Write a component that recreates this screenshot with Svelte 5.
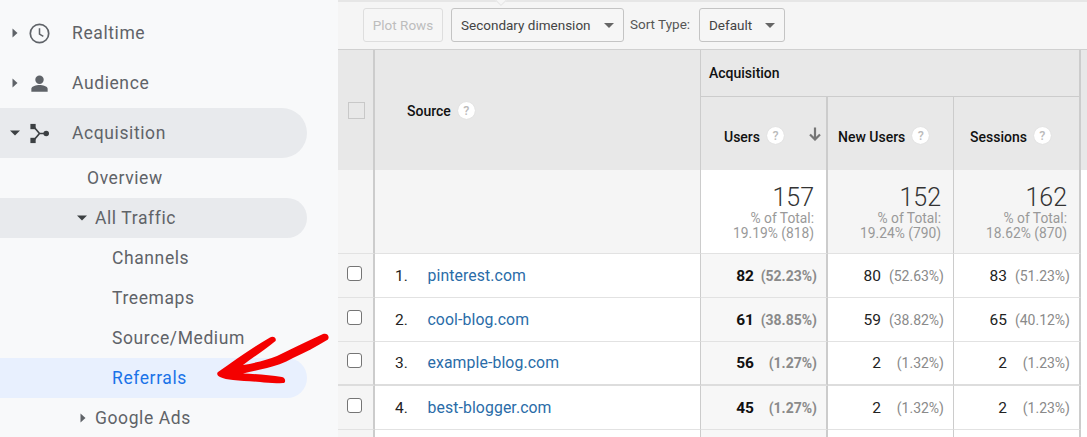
<script>
  const rows = [
    { n: 1, site: 'pinterest.com', users: 82, usersPct: '(52.23%)', newUsers: 80, newPct: '(52.63%)', sessions: 83, sessPct: '(51.23%)' },
    { n: 2, site: 'cool-blog.com', users: 61, usersPct: '(38.85%)', newUsers: 59, newPct: '(38.82%)', sessions: 65, sessPct: '(40.12%)' },
    { n: 3, site: 'example-blog.com', users: 56, usersPct: '(1.27%)', newUsers: 2, newPct: '(1.32%)', sessions: 2, sessPct: '(1.23%)' },
    { n: 4, site: 'best-blogger.com', users: 45, usersPct: '(1.27%)', newUsers: 2, newPct: '(1.32%)', sessions: 2, sessPct: '(1.23%)' }
  ];

  const totals = [
    { value: 157, pct: '19.19% (818)', main: true },
    { value: 152, pct: '19.24% (790)' },
    { value: 162, pct: '18.62% (870)' }
  ];
</script>

<div class="page">
  <nav class="sidebar">
    <div class="item top">
      <svg class="caret" viewBox="0 0 6 10"><path d="M0.5 0.5 5.5 5 0.5 9.5z" /></svg>
      <svg class="icon" viewBox="0 0 24 24">
        <circle cx="12" cy="12" r="9.6" fill="none" stroke="#5f6368" stroke-width="1.8" />
        <path d="M12 6.5V12.6L16 15" fill="none" stroke="#5f6368" stroke-width="1.6" />
      </svg>
      <span>Realtime</span>
    </div>
    <div class="item top">
      <svg class="caret" viewBox="0 0 6 10"><path d="M0.5 0.5 5.5 5 0.5 9.5z" /></svg>
      <svg class="icon" viewBox="0 0 24 24">
        <circle cx="12" cy="8" r="4.4" fill="#5f6368" />
        <path d="M3.5 20.5V17.6C3.5 14.8 8.8 13.6 12 13.6S20.500 14.800 20.500 17.6V20.500z" fill="#5f6368" />
      </svg>
      <span>Audience</span>
    </div>
    <div class="item top pill">
      <svg class="caret down" viewBox="0 0 10 6"><path d="M0 0.5H10L5 5.500z" /></svg>
      <svg class="icon" viewBox="0 0 24 24">
        <rect x="2.500" y="2" width="5.500" height="5.500" fill="#3c4043" />
        <rect x="2.500" y="16.500" width="5.500" height="5.500" fill="#3c4043" />
        <circle cx="19" cy="12" r="2.900" fill="#3c4043" />
        <path d="M6 5 12 12H19M12 12 6 19" fill="none" stroke="#3c4043" stroke-width="1.800" />
      </svg>
      <span>Acquisition</span>
    </div>
    <div class="item sub overview"><span>Overview</span></div>
    <div class="item sub second pill">
      <svg class="caret down" viewBox="0 0 10 6"><path d="M0 0.5H10L5 5.500z" /></svg>
      <span>All Traffic</span>
    </div>
    <div class="item sub third"><span>Channels</span></div>
    <div class="item sub third"><span>Treemaps</span></div>
    <div class="item sub third"><span>Source/Medium</span></div>
    <div class="item sub third pill active"><span>Referrals</span></div>
    <div class="item sub second">
      <svg class="caret" viewBox="0 0 6 10"><path d="M0.5 0.5 5.5 5 0.5 9.5z" /></svg>
      <span>Google Ads</span>
    </div>
  </nav>

  <main class="report">
    <div class="toolbar">
      <button class="btn disabled">Plot Rows</button>
      <button class="btn secondary">Secondary dimension <i class="tri"></i></button>
      <span class="sort-label">Sort Type:</span>
      <button class="btn sort">Default <i class="tri"></i></button>
    </div>

    <div class="thead">
      <div class="th check-head"><span class="head-box"></span></div>
      <div class="th source-head">Source <span class="help">?</span></div>
      <div class="th group-head">Acquisition</div>
      <div class="th edge-head"></div>
      <div class="th metric users-head">Users <span class="help">?</span>
        <svg class="sort-arrow" viewBox="0 0 12 14"><path d="M6 0.500V12M1 7.500 6 12.500 11 7.500" fill="none" stroke="#757575" stroke-width="2.200" /></svg>
      </div>
      <div class="th metric">New Users <span class="help">?</span></div>
      <div class="th metric last">Sessions <span class="help">?</span></div>
    </div>

    <div class="row total">
      <div class="cell check"></div>
      <div class="cell source"></div>
      {#each totals as t, i}
        <div class="cell sum" class:main={t.main} class:thick={i !== 1}>
          <div class="big">{t.value}</div>
          <div class="of">% of Total:</div>
          <div class="of">{t.pct}</div>
        </div>
      {/each}
    </div>

    {#each rows as r}
      <div class="row data" class:heavy={r.n === 3}>
        <div class="cell check"><span class="box"></span></div>
        <div class="cell source"><span class="num">{r.n}.</span><span class="link">{r.site}</span></div>
        <div class="cell val main thick"><b>{r.users}</b><span class="pct">{r.usersPct}</span></div>
        <div class="cell val"><span>{r.newUsers}</span><span class="pct">{r.newPct}</span></div>
        <div class="cell val thick"><span>{r.sessions}</span><span class="pct">{r.sessPct}</span></div>
      </div>
    {/each}
    <div class="row data tail">
      <div class="cell check"></div>
      <div class="cell source"></div>
      <div class="cell val main thick"></div>
      <div class="cell val"></div>
      <div class="cell val thick"></div>
    </div>
  </main>

  <!-- hand drawn annotation on top of the page -->
  <svg class="scribble" viewBox="0 0 1087 437">
    <path
      fill="#f40000"
      d="M218 372C235 360 253 347 270 337.500C273 335.500 277 338 275.500 341C266 349 255 356 243 365C255 363 267 360 277 356C292 349 307 341 323 334C327 332.500 330 336 328 339.500C316 347 304 353 293 358C284 363 275 366 267 368C258 370 250 372 243 373.500C256 374 270 375 282 377C286 378 286 383 283 383C275 383.500 267 383 260 382C250 381 241 381 233 380C228 379.500 223 378.500 220 377C217 375.500 216.500 373.500 218 372z"
    />
  </svg>
</div>

<style>
  :global(body) {
    margin: 0;
    background: #fff;
  }

  .page {
    position: relative;
    display: flex;
    width: 1087px;
    height: 437px;
    overflow: hidden;
    font-family: Roboto, "Liberation Sans", sans-serif;
  }

  /* sidebar */
  .sidebar {
    flex: 0 0 338px;
    box-sizing: border-box;
    padding: 8px 31px 0 0;
    background: #f8f9fa;
  }

  .item {
    position: relative;
    display: flex;
    align-items: center;
    height: 40px;
    font-size: 17.500px;
    letter-spacing: 0.6px;
    color: #5f6368;
  }

  .top {
    height: 50px;
    padding-left: 72px;
  }

  .pill {
    background: #e8eaed;
    border-radius: 0 25px 25px 0;
  }

  .overview {
    padding-left: 87px;
  }

  .second {
    padding-left: 95px;
  }

  .third {
    padding-left: 112px;
  }

  .active {
    background: #e8f0fe;
    color: #1a73e8;
  }

  .caret {
    position: absolute;
    left: 12px;
    width: 6px;
    height: 10px;
    fill: #5f6368;
  }

  .caret.down {
    left: 10px;
    width: 10px;
    height: 6px;
    fill: #3c4043;
  }

  .second .caret {
    left: 80px;
  }

  .second .caret.down {
    left: 77px;
  }

  .icon {
    position: absolute;
    left: 28px;
    width: 23px;
    height: 23px;
  }

  /* toolbar */
  .report {
    flex: 1;
    min-width: 0;
  }

  .toolbar {
    position: relative;
    display: flex;
    align-items: center;
    gap: 8px;
    box-sizing: border-box;
    height: 50px;
    padding: 0 0 0 25px;
    border-top: 2px solid #e6e6e6;
    border-bottom: 1px solid #d0d0d0;
    background: #f5f5f5;
    font-size: 13.500px;
  }

  /* little notch on the top line */
  .toolbar::before {
    content: "";
    position: absolute;
    left: 158px;
    top: -2px;
    width: 10px;
    height: 10px;
    background: #f5f5f5;
    border: 1px solid #e6e6e6;
    box-sizing: border-box;
    transform: translateY(-6px) rotate(45deg);
  }

  .btn {
    display: flex;
    align-items: center;
    justify-content: space-between;
    box-sizing: border-box;
    height: 34px;
    margin-top: -1px;
    padding: 0 9px;
    border: 1px solid #c4c4c4;
    border-radius: 3px;
    background: #f6f6f6;
    color: #444;
    font: inherit;
    white-space: nowrap;
  }

  .disabled {
    width: 80px;
    justify-content: center;
    padding: 0;
    border-color: #dedede;
    color: #bdbdbd;
  }

  .secondary {
    width: 173px;
  }

  .sort {
    width: 86px;
  }

  .sort-label {
    width: 61px;
    margin: -3px 0 0 -2px;
    color: #555;
  }

  .tri {
    width: 0;
    height: 0;
    border: 5px solid transparent;
    border-top: 5px solid #666;
    border-bottom: 0;
  }

  /* table head */
  .thead {
    display: grid;
    grid-template-columns: 37px 326px 127px 126px 127px 6px;
    grid-template-rows: 47px 73px;
    height: 120px;
    background: #e8e8e8;
    color: #111;
    font-size: 14px;
    font-weight: 500;
  }

  .th {
    display: flex;
    align-items: center;
    box-sizing: border-box;
  }

  .check-head {
    grid-row: 1 / span 2;
    justify-content: center;
    padding-left: 1px;
    border-right: 2px solid #ccc;
  }

  .head-box {
    width: 15px;
    height: 15px;
    border: 1px solid #c8c8c8;
  }

  .source-head {
    grid-row: 1 / span 2;
    padding: 2px 0 0 32px;
    border-right: 1px solid #ccc;
  }

  .group-head {
    grid-column: 3 / span 3;
    padding: 0 0 0 8px;
    border-right: 2px solid #ccc;
    border-bottom: 1px solid #ccc;
  }

  .edge-head {
    grid-row: 1 / span 2;
    grid-column: 6;
  }

  .metric {
    position: relative;
    padding: 6px 0 0 10px;
    border-right: 1px solid #ccc;
  }

  .users-head {
    padding-left: 23px;
    border-right-width: 2px;
  }

  .last {
    padding-left: 16px;
    border-right-width: 2px;
  }

  .help {
    display: inline-flex;
    align-items: center;
    justify-content: center;
    width: 17px;
    height: 17px;
    margin: -2px 0 0 7px;
    border-radius: 50%;
    background: #fff;
    box-shadow: 0 0 1px #ccc;
    color: #bbb;
    font-size: 12.500px;
  }

  .sort-arrow {
    position: absolute;
    right: 5px;
    top: 30px;
    width: 12px;
    height: 14px;
  }

  /* table body */
  .row {
    display: grid;
    grid-template-columns: 37px 326px 127px 126px 127px;
  }

  .cell {
    box-sizing: border-box;
    border-right: 1px solid #ccc;
    border-bottom: 1px solid #e2e2e2;
  }

  .thick {
    border-right-width: 2px;
  }

  .check {
    display: flex;
    align-items: center;
    padding-left: 9px;
    border-right: 2px solid #ccc;
    background: #f5f5f5;
  }

  .total {
    height: 84px;
  }

  .total .source {
    background: #f5f5f5;
  }

  .sum {
    padding: 15px 12px 0 0;
    background: #f5f5f5;
    text-align: right;
  }

  .sum.main {
    background: #fff;
  }

  .big {
    margin-bottom: 1px;
    font-size: 25px;
    line-height: 25px;
    color: #333;
    font-weight: 300;
  }

  .of {
    font-size: 13.800px;
    line-height: 15px;
    color: #999;
  }

  .data {
    height: 44px;
    font-size: 15.500px;
    color: #222;
  }

  .heavy .cell {
    border-bottom: 2px solid #ddd;
  }

  .box {
    width: 13px;
    height: 13px;
    margin-top: -5px;
    border: 1px solid #757575;
    border-radius: 3px;
    background: #fff;
  }

  .source {
    display: flex;
    align-items: center;
    padding-left: 20px;
    background: #fff;
  }

  .num {
    width: 32.500px;
  }

  .link {
    margin-top: -1px;
    color: #2a6ca8;
    font-size: 15.800px;
    letter-spacing: 0.1px;
  }

  .val {
    display: flex;
    align-items: center;
    justify-content: flex-end;
    padding-right: 9px;
    background: #fff;
  }

  .val.main {
    background: #f7f7f7;
  }

  .val b {
    font-weight: 700;
    color: #111;
  }

  .pct {
    width: 63px;
    text-align: right;
    font-size: 14px;
    color: #8a8a8a;
  }

  .main .pct {
    font-weight: 700;
  }

  .scribble {
    position: absolute;
    inset: 0;
    width: 1087px;
    height: 437px;
    pointer-events: none;
  }
</style>
